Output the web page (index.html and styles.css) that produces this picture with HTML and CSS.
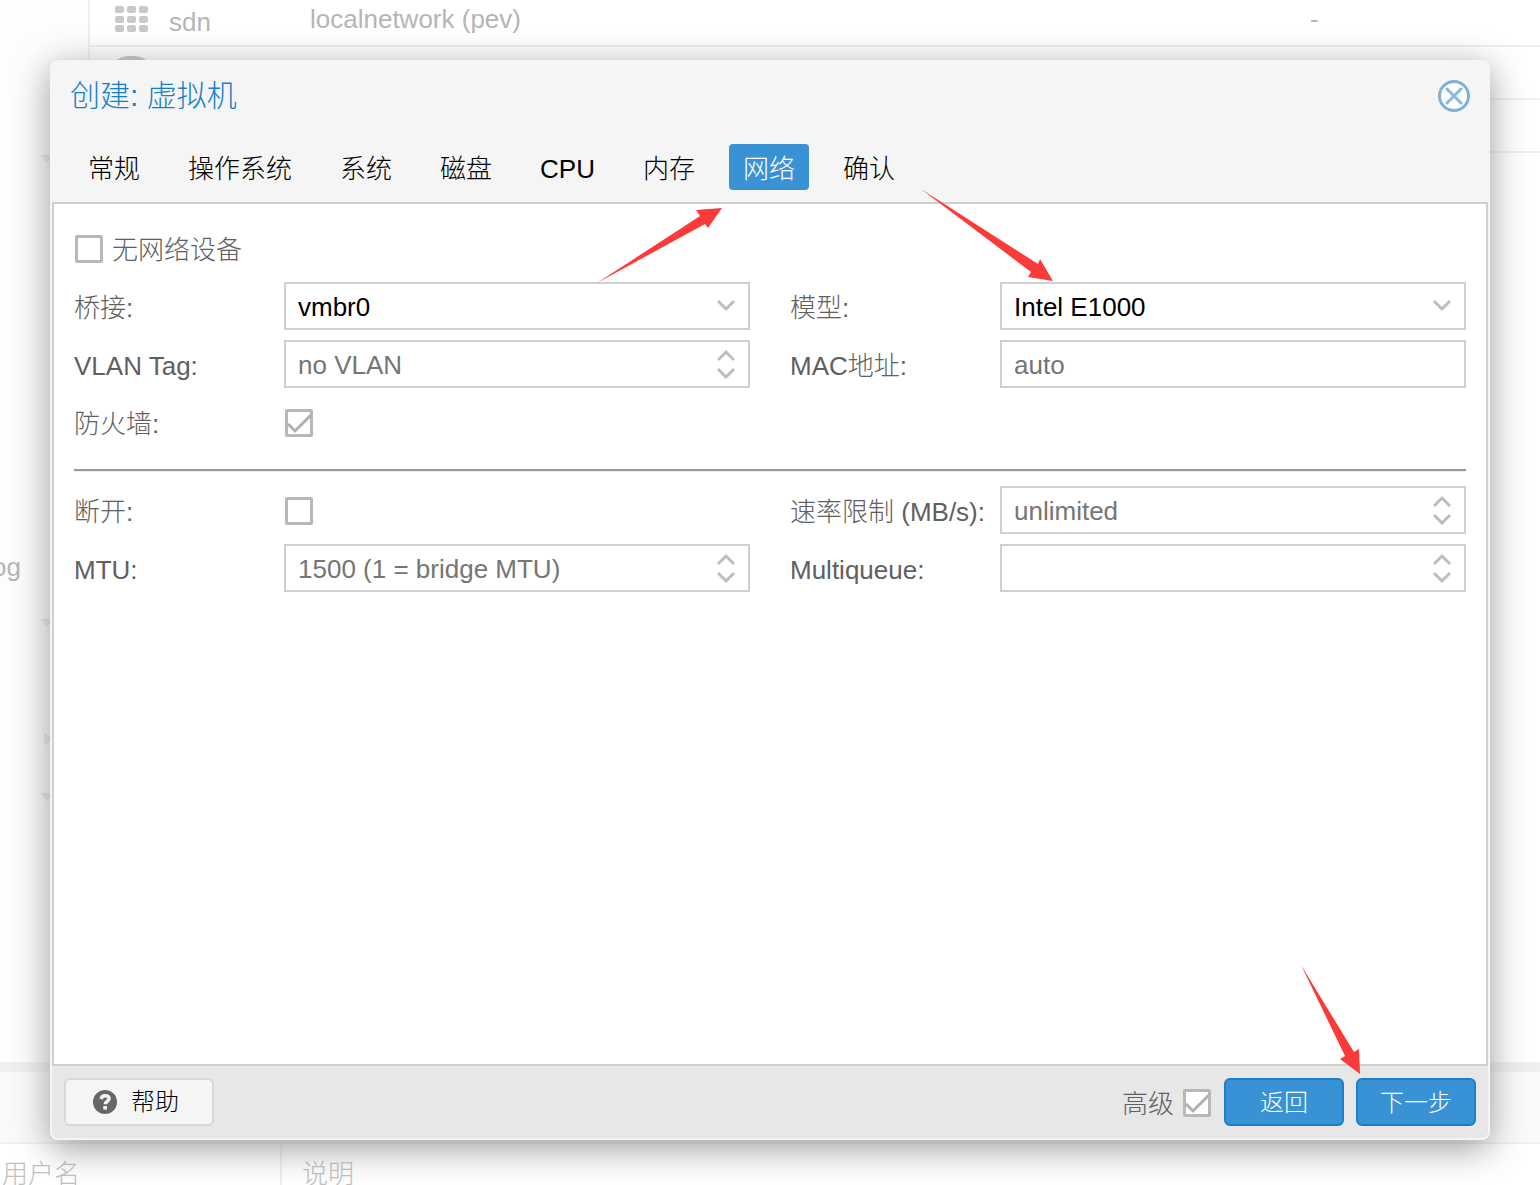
FILE: index.html
```html
<!DOCTYPE html>
<html lang="zh-CN">
<head>
<meta charset="utf-8">
<title>创建: 虚拟机</title>
<link rel="stylesheet" href="styles.css">
</head>
<body>
<div class="workspace">
  <div class="workspace-main">
    <ul class="tree">
      <li><svg class="tree-caret" viewBox="0 0 14 8"><path d="M0 0h14L7 8z"/></svg></li>
      <li></li><li></li><li></li><li></li><li></li><li></li>
      <li class="tree-text">og</li>
      <li><svg class="tree-caret" viewBox="0 0 14 8"><path d="M0 0h14L7 8z"/></svg></li>
      <li></li>
      <li><svg class="tree-caret tree-caret-right" viewBox="0 0 8 14"><path d="M0 0v14l8-7z"/></svg></li>
      <li><svg class="tree-caret" viewBox="0 0 14 8"><path d="M0 0h14L7 8z"/></svg></li>
    </ul>
    <table class="resources">
      <colgroup><col class="col-type"><col class="col-name"><col></colgroup>
      <tbody>
        <tr>
          <td>
            <div class="type-cell">
              <svg width="33" height="26" viewBox="0 0 33 26"><g fill="#c9c9c9"><rect width="9" height="7" rx="2"/><rect x="12" width="9" height="7" rx="2"/><rect x="24" width="9" height="7" rx="2"/><rect y="10" width="9" height="7" rx="2"/><rect x="12" y="10" width="9" height="7" rx="2"/><rect x="24" y="10" width="9" height="7" rx="2"/><rect y="19" width="9" height="7" rx="2"/><rect x="12" y="19" width="9" height="7" rx="2"/><rect x="24" y="19" width="9" height="7" rx="2"/></g></svg>
              <span>sdn</span>
            </div>
          </td>
          <td>localnetwork (pev)</td>
          <td>-</td>
        </tr>
        <tr>
          <td>
            <div class="type-cell">
              <svg width="33" height="34" viewBox="0 0 33 34"><path fill="#c0c0c0" d="M0 8c0-10.600 33-10.600 33 0v20c0 8-33 8-33 0z"/></svg>
            </div>
          </td>
          <td></td><td></td>
        </tr>
        <tr><td></td><td></td><td></td></tr>
      </tbody>
    </table>
  </div>
  <div class="log-panel">
    <div class="log-tabs"></div>
    <div class="log-header"><span>用户名</span><span>说明</span></div>
  </div>
</div>

<main class="dialog" role="dialog" aria-labelledby="dialog-title">
  <header class="dialog-header">
    <h1 id="dialog-title">创建: 虚拟机</h1>
    <button class="close" type="button" aria-label="关闭">
      <svg width="32" height="32" viewBox="0 0 32 32" fill="none"><circle cx="16" cy="16" r="14.500" fill="#fafcfe" stroke="#7fb0d6" stroke-width="3"/><path d="M9 9l14 14M23 9L9 23" stroke="#8ab8df" stroke-width="3" stroke-linecap="round"/></svg>
    </button>
  </header>
  <nav class="tabs">
    <button type="button">常规</button>
    <button type="button">操作系统</button>
    <button type="button">系统</button>
    <button type="button">磁盘</button>
    <button type="button">CPU</button>
    <button type="button">内存</button>
    <div class="anchor">
      <button type="button" class="active">网络</button>
      <svg class="arrow arrow-tab" width="126" height="76" viewBox="0 0 126 76"><path d="M0 75L103 8L99 2L125 0L111 20L108 16z"/></svg>
    </div>
    <button type="button">确认</button>
  </nav>

  <form class="panel">
    <label class="check-row">
      <span class="check"><input type="checkbox"></span>
      <span class="check-text">无网络设备</span>
    </label>

    <div class="fields">
      <div class="field">
        <label for="bridge">桥接:</label>
        <div class="control">
          <select id="bridge"><option>vmbr0</option></select>
          <svg class="trigger" viewBox="0 0 18 30"><path d="M1 10l8 8 8-8"/></svg>
        </div>
      </div>
      <div class="field">
        <label for="model">模型:</label>
        <div class="control">
          <select id="model"><option>Intel E1000</option></select>
          <svg class="trigger" viewBox="0 0 18 30"><path d="M1 10l8 8 8-8"/></svg>
          <svg class="arrow arrow-model" width="133" height="93" viewBox="0 0 133 93"><path d="M0 0L117 75L119 70L132 92L107 88L110 83z"/></svg>
        </div>
      </div>
      <div class="field">
        <label for="vlan">VLAN Tag:</label>
        <div class="control">
          <input id="vlan" type="text" placeholder="no VLAN">
          <svg class="trigger" viewBox="0 0 18 30"><path d="M1 11l8-8 8 8M1 20l8 8 8-8"/></svg>
        </div>
      </div>
      <div class="field">
        <label for="mac">MAC地址:</label>
        <div class="control"><input id="mac" type="text" placeholder="auto"></div>
      </div>
      <div class="field">
        <label for="firewall">防火墙:</label>
        <span class="check"><input id="firewall" type="checkbox" checked><svg viewBox="0 0 28 28"><path d="M3 15l7 7L26 6"/></svg></span>
      </div>
    </div>

    <hr>

    <div class="fields">
      <div class="field">
        <label for="disconnect">断开:</label>
        <span class="check"><input id="disconnect" type="checkbox"></span>
      </div>
      <div class="field">
        <label for="rate">速率限制 (MB/s):</label>
        <div class="control">
          <input id="rate" type="text" placeholder="unlimited">
          <svg class="trigger" viewBox="0 0 18 30"><path d="M1 11l8-8 8 8M1 20l8 8 8-8"/></svg>
        </div>
      </div>
      <div class="field">
        <label for="mtu">MTU:</label>
        <div class="control">
          <input id="mtu" type="text" placeholder="1500 (1 = bridge MTU)">
          <svg class="trigger" viewBox="0 0 18 30"><path d="M1 11l8-8 8 8M1 20l8 8 8-8"/></svg>
        </div>
      </div>
      <div class="field">
        <label for="queues">Multiqueue:</label>
        <div class="control">
          <input id="queues" type="text">
          <svg class="trigger" viewBox="0 0 18 30"><path d="M1 11l8-8 8 8M1 20l8 8 8-8"/></svg>
        </div>
      </div>
    </div>
  </form>

  <footer class="dialog-footer">
    <button type="button" class="help">
      <svg width="24" height="24" viewBox="0 0 24 24"><circle cx="12" cy="12" r="12" fill="#666"/><path d="M8 9c.6-2.200 2-3.200 4.200-3.200 2.300 0 3.900 1.200 3.900 3 0 2.700-3.900 2.700-3.900 5.400" fill="none" stroke="#f5f5f5" stroke-width="3.400"/><path d="M10.300 16h3.600v3.600h-3.600z" fill="#f5f5f5"/></svg>
      帮助
    </button>
    <label class="advanced">
      <span class="check-text">高级</span>
      <span class="check"><input type="checkbox" checked><svg viewBox="0 0 28 28"><path d="M3 15l7 7L26 6"/></svg></span>
    </label>
    <button type="button" class="primary">返回</button>
    <div class="anchor">
      <button type="button" class="primary">下一步</button>
      <svg class="arrow arrow-next" width="60" height="110" viewBox="0 0 60 110"><path d="M0 0L53 87L58 84L59 109L39 94L44 91z"/></svg>
    </div>
  </footer>
</main>
</body>
</html>
```
FILE: styles.css
```css
* { box-sizing: border-box; }

body {
  margin: 0;
  min-height: 100vh;
  font: 300 26px/30px "Liberation Sans", "Noto Sans CJK SC", sans-serif;
  color: #606060;
  background: #fff;
}

button, input, select { font: inherit; }
svg { display: block; flex: none; }

/* Masked workspace behind the dialog */
.workspace {
  display: flex;
  flex-direction: column;
  height: 100vh;
  overflow: hidden;
  color: #b5b5b5;
}
.workspace-main { display: flex; flex: 1; min-height: 0; }
.tree {
  flex: none;
  width: 90px;
  margin: 0;
  padding: 130px 0 0;
  list-style: none;
  background: #fdfdfd;
  border-right: 2px solid #efefef;
}
.tree li { display: flex; align-items: center; height: 58px; padding-left: 40px; }
.tree .tree-text { justify-content: flex-end; width: 21px; padding: 4px 0 0; overflow: hidden; }
.tree-caret { width: 14px; height: 8px; fill: #e8e8e8; }
.tree-caret-right { width: 8px; height: 14px; margin-left: 4px; }

.resources {
  flex: 1;
  align-self: flex-start;
  table-layout: fixed;
  border-collapse: separate;
  border-spacing: 0;
}
.col-type { width: 220px; }
.col-name { width: 1000px; }
.resources td { height: 53px; padding: 0; border-bottom: 2px solid #efefef; }
.resources tr:first-child td { height: 47px; padding-bottom: 8px; }
.type-cell { display: flex; align-items: center; gap: 21px; padding-left: 25px; }
.type-cell span { padding-top: 6px; }

.log-panel { border-top: 10px solid #efefef; }
.log-tabs { height: 70px; background: #fafafa; }
.log-header {
  display: grid;
  grid-template-columns: 282px 1fr;
  height: 43px;
  border-top: 2px solid #efefef;
  color: #c0c0c0;
}
.log-header span { padding: 15px 2px 0; }
.log-header span + span { padding-left: 20px; }
.log-header span:first-child { border-right: 2px solid #efefef; }

/* Dialog */
.dialog {
  position: absolute;
  inset: 60px 50px 45px;
  display: flex;
  flex-direction: column;
  padding: 2px;
  border-radius: 8px;
  background: #f5f5f5;
  box-shadow: 0 8px 36px #999;
}
.dialog-header {
  display: flex;
  align-items: center;
  justify-content: space-between;
  height: 68px;
  padding: 0 18px;
}
.dialog-header h1 { margin: 0; font-size: 30px; font-weight: 300; line-height: 36px; color: #157fcc; }
.close { padding: 0; border: 0; background: none; }

.tabs { display: flex; gap: 20px; padding: 14px 22px 12px; }
.tabs button {
  height: 46px;
  padding: 3px 14px 0;
  border: 0;
  border-radius: 4px;
  background: none;
  color: #000;
}
.tabs .active { background: #3892d4; color: #fff; }

.panel { flex: 1; padding: 20px; border: 2px solid #cfcfcf; background: #fff; }
.check-row { display: flex; align-items: center; gap: 9px; width: max-content; height: 48px; margin-bottom: 10px; padding: 2px 0 0 1px; }
.check-text { padding-top: 2px; }
.fields { display: grid; grid-template-columns: 1fr 1fr; gap: 10px 40px; }
.field { display: grid; grid-template-columns: 210px 1fr; align-items: center; height: 48px; }
.field label { padding-top: 3px; }
.field .check { margin: 2px 0 0 1px; }

.control { position: relative; }
.control input, .control select {
  display: block;
  width: 100%;
  height: 48px;
  padding: 2px 48px 0 12px;
  border: 2px solid #cfcfcf;
  border-radius: 0;
  background: #fff;
  color: #000;
  appearance: none;
}
.control input::placeholder { color: #757575; opacity: 1; }
.trigger {
  position: absolute;
  top: 9px;
  right: 15px;
  width: 18px;
  height: 30px;
  fill: none;
  stroke: #bdbdbd;
  stroke-width: 3;
  pointer-events: none;
}

.check { display: grid; width: 28px; height: 28px; }
.check > * { grid-area: 1 / 1; }
.check input {
  width: 28px;
  height: 28px;
  margin: 0;
  border: 3px solid #b8b8b8;
  border-radius: 2px;
  background: #fff;
  appearance: none;
}
.check svg { position: relative; fill: none; stroke: #b0b0b0; stroke-width: 3; pointer-events: none; }

hr { height: 3px; margin: 23px 0 14px; border: 0; border-top: 2px solid #999; border-bottom: 1px solid #eee; }

.dialog-footer {
  display: flex;
  align-items: center;
  gap: 12px;
  height: 72px;
  padding: 0 12px;
  border-radius: 0 0 6px 6px;
  background: #e7e7e7;
}
.help {
  display: flex;
  align-items: center;
  gap: 14px;
  width: 150px;
  height: 48px;
  margin-right: auto;
  padding: 0 0 0 27px;
  border: 2px solid #d8d8d8;
  border-radius: 6px;
  background: #f5f5f5;
  color: #000;
  font-size: 24px;
}
.advanced { display: flex; align-items: center; gap: 9px; padding: 2px 1px 0 0; }
.primary {
  display: block;
  width: 120px;
  height: 48px;
  padding: 1px 0 0;
  border: 2px solid #157fcc;
  border-radius: 6px;
  background: #3892d4;
  color: #fff;
  font-size: 24px;
}

/* Annotation arrows, each pinned to the control it points at */
.anchor { position: relative; }
.arrow { position: absolute; z-index: 1; fill: #fb3a3a; pointer-events: none; }
.arrow-tab { top: 64px; right: 86px; }
.arrow-model { top: -93px; left: -79px; }
.arrow-next { top: -113px; left: -55px; }
```
